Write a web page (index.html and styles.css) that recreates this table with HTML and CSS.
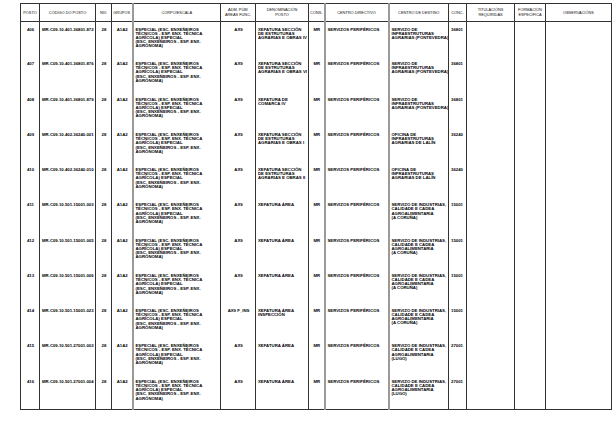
FILE: index.html
```html
<!DOCTYPE html>
<html lang="gl">
<head>
<meta charset="utf-8">
<title>RPT</title>
<link rel="stylesheet" href="styles.css">
</head>
<body>
<table class="rpt">
<colgroup>
<col class="w-posto"><col class="w-cod"><col class="w-niv"><col class="w-grp"><col class="w-corpo"><col class="w-adm"><col class="w-den"><col class="w-cons"><col class="w-cdir"><col class="w-dest"><col class="w-conc"><col class="w-tit"><col class="w-form"><col class="w-obs">
</colgroup>
<thead>
<tr>
<th>POSTO</th><th>CÓDIGO DO POSTO</th><th>NIV.</th><th>GRUPOS</th><th class="g">CORPO/ESCALA</th><th>ADM. PÚB/<br>ÁREAS FUNC.</th><th>DENOMINACIÓN<br>POSTO</th><th>CONS.</th><th class="g">CENTRO DIRECTIVO</th><th class="g">CENTRO DE DESTINO</th><th>CONC.</th><th>TITULACIÓNS<br>REQUIRIDAS</th><th>FORMACIÓN<br>ESPECÍFICA</th><th>OBSERVACIÓNS</th>
</tr>
</thead>
<tbody>
<tr><td class="c">406</td><td>MR.C09.10.401.36801.872</td><td class="c">28</td><td class="c">A1A2</td><td class="g">ESPECIAL (ESC. ENXEÑEIROS<br>TÉCNICOS - ESP. ENX. TÉCNICA<br>AGRÍCOLA) ESPECIAL<br><span class="p2">(ESC. ENXEÑEIROS - ESP. ENX.<br>AGRÓNOMA)</span></td><td class="c">AX9</td><td>XEFATURA SECCIÓN<br>DE ESTRUTURAS<br>AGRARIAS E OBRAS IV</td><td class="c">MR</td><td class="g">SERVIZOS PERIFÉRICOS</td><td class="g">SERVIZO DE<br>INFRAESTRUTURAS<br>AGRARIAS (PONTEVEDRA)</td><td>36801</td><td></td><td></td><td></td></tr>
<tr><td class="c">407</td><td>MR.C09.10.401.36801.876</td><td class="c">28</td><td class="c">A1A2</td><td class="g">ESPECIAL (ESC. ENXEÑEIROS<br>TÉCNICOS - ESP. ENX. TÉCNICA<br>AGRÍCOLA) ESPECIAL<br><span class="p2">(ESC. ENXEÑEIROS - ESP. ENX.<br>AGRÓNOMA)</span></td><td class="c">AX9</td><td>XEFATURA SECCIÓN<br>DE ESTRUTURAS<br>AGRARIAS E OBRAS VI</td><td class="c">MR</td><td class="g">SERVIZOS PERIFÉRICOS</td><td class="g">SERVIZO DE<br>INFRAESTRUTURAS<br>AGRARIAS (PONTEVEDRA)</td><td>36801</td><td></td><td></td><td></td></tr>
<tr><td class="c">408</td><td>MR.C09.10.401.36801.879</td><td class="c">28</td><td class="c">A1A2</td><td class="g">ESPECIAL (ESC. ENXEÑEIROS<br>TÉCNICOS - ESP. ENX. TÉCNICA<br>AGRÍCOLA) ESPECIAL<br><span class="p2">(ESC. ENXEÑEIROS - ESP. ENX.<br>AGRÓNOMA)</span></td><td class="c">AX9</td><td>XEFATURA DE<br>COMARCA IV</td><td class="c">MR</td><td class="g">SERVIZOS PERIFÉRICOS</td><td class="g">SERVIZO DE<br>INFRAESTRUTURAS<br>AGRARIAS (PONTEVEDRA)</td><td>36801</td><td></td><td></td><td></td></tr>
<tr><td class="c">409</td><td>MR.C09.10.402.36240.001</td><td class="c">28</td><td class="c">A1A2</td><td class="g">ESPECIAL (ESC. ENXEÑEIROS<br>TÉCNICOS - ESP. ENX. TÉCNICA<br>AGRÍCOLA) ESPECIAL<br><span class="p2">(ESC. ENXEÑEIROS - ESP. ENX.<br>AGRÓNOMA)</span></td><td class="c">AX9</td><td>XEFATURA SECCIÓN<br>DE ESTRUTURAS<br>AGRARIAS E OBRAS I</td><td class="c">MR</td><td class="g">SERVIZOS PERIFÉRICOS</td><td class="g">OFICINA DE<br>INFRAESTRUTURAS<br>AGRARIAS DE LALÍN</td><td>36240</td><td></td><td></td><td></td></tr>
<tr><td class="c">410</td><td>MR.C09.10.402.36240.010</td><td class="c">28</td><td class="c">A1A2</td><td class="g">ESPECIAL (ESC. ENXEÑEIROS<br>TÉCNICOS - ESP. ENX. TÉCNICA<br>AGRÍCOLA) ESPECIAL<br><span class="p2">(ESC. ENXEÑEIROS - ESP. ENX.<br>AGRÓNOMA)</span></td><td class="c">AX9</td><td>XEFATURA SECCIÓN<br>DE ESTRUTURAS<br>AGRARIAS E OBRAS II</td><td class="c">MR</td><td class="g">SERVIZOS PERIFÉRICOS</td><td class="g">OFICINA DE<br>INFRAESTRUTURAS<br>AGRARIAS DE LALÍN</td><td>36240</td><td></td><td></td><td></td></tr>
<tr><td class="c">411</td><td>MR.C09.10.501.15001.003</td><td class="c">28</td><td class="c">A1A2</td><td class="g">ESPECIAL (ESC. ENXEÑEIROS<br>TÉCNICOS - ESP. ENX. TÉCNICA<br>AGRÍCOLA) ESPECIAL<br><span class="p2">(ESC. ENXEÑEIROS - ESP. ENX.<br>AGRÓNOMA)</span></td><td class="c">AX9</td><td>XEFATURA ÁREA</td><td class="c">MR</td><td class="g">SERVIZOS PERIFÉRICOS</td><td class="g">SERVIZO DE INDUSTRIAS,<br>CALIDADE E CADEA<br>AGROALIMENTARIA<br>(A CORUÑA)</td><td>15001</td><td></td><td></td><td></td></tr>
<tr><td class="c">412</td><td>MR.C09.10.501.15001.005</td><td class="c">28</td><td class="c">A1A2</td><td class="g">ESPECIAL (ESC. ENXEÑEIROS<br>TÉCNICOS - ESP. ENX. TÉCNICA<br>AGRÍCOLA) ESPECIAL<br><span class="p2">(ESC. ENXEÑEIROS - ESP. ENX.<br>AGRÓNOMA)</span></td><td class="c">AX9</td><td>XEFATURA ÁREA</td><td class="c">MR</td><td class="g">SERVIZOS PERIFÉRICOS</td><td class="g">SERVIZO DE INDUSTRIAS,<br>CALIDADE E CADEA<br>AGROALIMENTARIA<br>(A CORUÑA)</td><td>15001</td><td></td><td></td><td></td></tr>
<tr><td class="c">413</td><td>MR.C09.10.501.15001.006</td><td class="c">28</td><td class="c">A1A2</td><td class="g">ESPECIAL (ESC. ENXEÑEIROS<br>TÉCNICOS - ESP. ENX. TÉCNICA<br>AGRÍCOLA) ESPECIAL<br><span class="p2">(ESC. ENXEÑEIROS - ESP. ENX.<br>AGRÓNOMA)</span></td><td class="c">AX9</td><td>XEFATURA ÁREA</td><td class="c">MR</td><td class="g">SERVIZOS PERIFÉRICOS</td><td class="g">SERVIZO DE INDUSTRIAS,<br>CALIDADE E CADEA<br>AGROALIMENTARIA<br>(A CORUÑA)</td><td>15001</td><td></td><td></td><td></td></tr>
<tr><td class="c">414</td><td>MR.C09.10.501.15001.023</td><td class="c">28</td><td class="c">A1A2</td><td class="g">ESPECIAL (ESC. ENXEÑEIROS<br>TÉCNICOS - ESP. ENX. TÉCNICA<br>AGRÍCOLA) ESPECIAL<br><span class="p2">(ESC. ENXEÑEIROS - ESP. ENX.<br>AGRÓNOMA)</span></td><td class="c">AX9 F_INS</td><td>XEFATURA ÁREA<br>INSPECCIÓN</td><td class="c">MR</td><td class="g">SERVIZOS PERIFÉRICOS</td><td class="g">SERVIZO DE INDUSTRIAS,<br>CALIDADE E CADEA<br>AGROALIMENTARIA<br>(A CORUÑA)</td><td>15001</td><td></td><td></td><td></td></tr>
<tr><td class="c">415</td><td>MR.C09.10.501.27001.003</td><td class="c">28</td><td class="c">A1A2</td><td class="g">ESPECIAL (ESC. ENXEÑEIROS<br>TÉCNICOS - ESP. ENX. TÉCNICA<br>AGRÍCOLA) ESPECIAL<br><span class="p2">(ESC. ENXEÑEIROS - ESP. ENX.<br>AGRÓNOMA)</span></td><td class="c">AX9</td><td>XEFATURA ÁREA</td><td class="c">MR</td><td class="g">SERVIZOS PERIFÉRICOS</td><td class="g">SERVIZO DE INDUSTRIAS,<br>CALIDADE E CADEA<br>AGROALIMENTARIA<br>(LUGO)</td><td>27001</td><td></td><td></td><td></td></tr>
<tr><td class="c">416</td><td>MR.C09.10.501.27001.004</td><td class="c">28</td><td class="c">A1A2</td><td class="g">ESPECIAL (ESC. ENXEÑEIROS<br>TÉCNICOS - ESP. ENX. TÉCNICA<br>AGRÍCOLA) ESPECIAL<br><span class="p2">(ESC. ENXEÑEIROS - ESP. ENX.<br>AGRÓNOMA)</span></td><td class="c">AX9</td><td>XEFATURA ÁREA</td><td class="c">MR</td><td class="g">SERVIZOS PERIFÉRICOS</td><td class="g">SERVIZO DE INDUSTRIAS,<br>CALIDADE E CADEA<br>AGROALIMENTARIA<br>(LUGO)</td><td>27001</td><td></td><td></td><td></td></tr>
</tbody>
</table>
</body>
</html>
```

FILE: styles.css
```css
html, body {
  margin: 0;
  padding: 0;
  background: #ffffff;
}

body {
  font-family: "Liberation Sans", Arial, sans-serif;
  color: #000;
}

.rpt {
  margin: 3px 0 0 20px;
  width: 591px;
  table-layout: fixed;
  border-collapse: collapse;
  font-size: 4.3px;
  line-height: 4.1px;
}

.w-posto { width: 19px; }
.w-cod { width: 56px; }
.w-niv { width: 16px; }
.w-grp { width: 21px; }
.w-corpo { width: 88px; }
.w-adm { width: 35px; }
.w-den { width: 53px; }
.w-cons { width: 16px; }
.w-cdir { width: 64px; }
.w-dest { width: 60px; }
.w-conc { width: 18px; }
.w-tit { width: 48px; }
.w-form { width: 31px; }
.w-obs { width: 66px; }

.rpt th,
.rpt td {
  border-left: 1px solid #333;
  border-right: 1px solid #333;
  padding: 0 1px 0 2px;
  white-space: nowrap;
  overflow: hidden;
}

.rpt th {
  height: 16px;
  padding: 1px 0 0 0;
  font-size: 3.9px;
  font-weight: normal;
  color: #111;
  text-align: center;
  vertical-align: middle;
  line-height: 4.6px;
  border-top: 1px solid #333;
  border-bottom: 1px solid #333;
}

.rpt td {
  height: 35.27px;
  box-sizing: border-box;
  padding-top: 5.5px;
  font-weight: bold;
  text-align: left;
  vertical-align: top;
}

.rpt tbody tr:last-child td {
  border-bottom: 1px solid #333;
}

.rpt .c {
  text-align: center;
}

.rpt .g {
  border-left: 2px solid #9a9a9a;
}

.p2 {
  display: inline-block;
  margin-top: 0.5px;
}
```
